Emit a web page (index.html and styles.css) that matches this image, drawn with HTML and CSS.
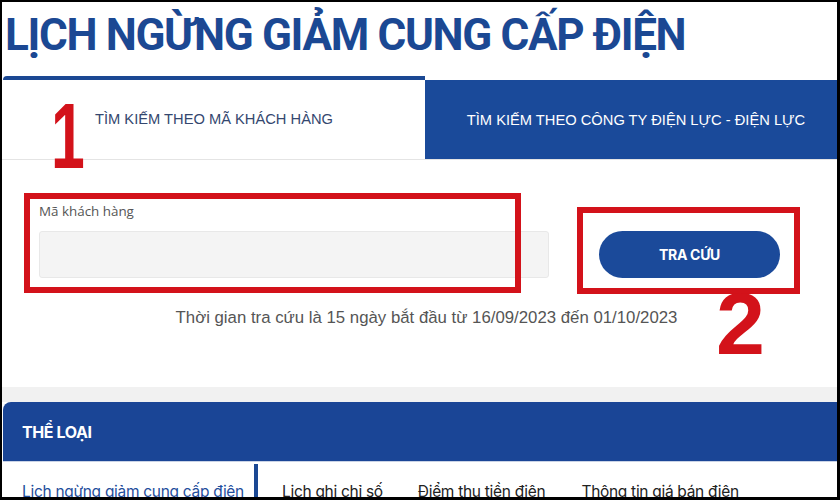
FILE: index.html
```html
<!DOCTYPE html>
<html lang="vi">
<head>
<meta charset="utf-8">
<title>Lịch ngừng giảm cung cấp điện</title>
<link rel="stylesheet" href="styles.css">
</head>
<body>
<div class="frame">
  <h1 class="title">LỊCH NGỪNG GIẢM CUNG CẤP ĐIỆN</h1>
  <div class="tabs">
    <div class="tab tab-active">TÌM KIẾM THEO MÃ KHÁCH HÀNG</div>
    <div class="tab tab-other">TÌM KIẾM THEO CÔNG TY ĐIỆN LỰC - ĐIỆN LỰC</div>
  </div>
  <div class="search">
    <div class="field">
      <label class="label">Mã khách hàng</label>
      <div class="input"></div>
    </div>
    <div class="btn">TRA CỨU</div>
  </div>
  <p class="note">Thời gian tra cứu là 15 ngày bắt đầu từ 16/09/2023 đến 01/10/2023</p>
  <div class="band"></div>
  <div class="cat-head">THỂ LOẠI</div>
  <div class="cat-list">
    <div class="cat-item cat-current">Lịch ngừng giảm cung cấp điện</div>
    <div class="cat-bar"></div>
    <div class="cat-item">Lịch ghi chỉ số</div>
    <div class="cat-item">Điểm thu tiền điện</div>
    <div class="cat-item">Thông tin giá bán điện</div>
  </div>

  <div class="mark mark-1"></div>
  <div class="mark mark-2"></div>
  <div class="num num-1">1</div>
  <div class="num num-2">2</div>
</div>
</body>
</html>
```
FILE: styles.css
```css
html, body {
  margin: 0;
  padding: 0;
  background: #000;
}
.frame {
  position: relative;
  margin: 2px 3px 0 2px;
  height: 495px;
  background: #fff;
  overflow: hidden;
}
.title {
  margin: 0;
  padding: 6px 0 0 3px;
  font-family: Roboto, "Liberation Sans", sans-serif;
  font-weight: 700;
  font-size: 44px;
  line-height: 54px;
  letter-spacing: -1.35px;
  color: #1b4893;
  white-space: nowrap;
}
.tabs {
  margin-top: 14px;
  display: flex;
  height: 84px;
  border-bottom: 1px solid #e4e4e4;
  box-sizing: border-box;
}
.tab {
  display: flex;
  align-items: center;
  justify-content: center;
  font-family: "Liberation Sans", Arial, sans-serif;
  font-size: 14.7px;
}
.tab-active {
  width: 422px;
  margin-left: 1px;
  border-top: 4px solid #1b4893;
  border-top-left-radius: 4px;
  color: #34476f;
  padding-bottom: 2px;
}
.tab-other {
  flex: 1;
  margin-top: 4px;
  background: #1a4a9a;
  color: #fff;
  padding-left: 10px;
}
.search {
  display: flex;
  align-items: flex-end;
  padding: 42px 0 0 37px;
}
.field {
  display: flex;
  flex-direction: column;
}
.label {
  font-family: "Open Sans", sans-serif;
  font-size: 13.4px;
  line-height: 18px;
  color: #555;
  margin-bottom: 11px;
}
.input {
  width: 508px;
  height: 45px;
  background: #f4f4f4;
  border: 1px solid #e8e8e8;
  border-radius: 3px;
}
.btn {
  margin-left: 50px;
  width: 181px;
  height: 47px;
  border-radius: 24px;
  background: #1b4a9a;
  color: #fff;
  font-family: Inter, Roboto, sans-serif;
  font-weight: 700;
  font-size: 14px;
  letter-spacing: -0.3px;
  display: flex;
  align-items: center;
  justify-content: center;
}
.note {
  margin: 30px 0 0;
  padding-left: 14px;
  text-align: center;
  font-family: "Liberation Sans", Arial, sans-serif;
  font-size: 16.8px;
  line-height: 20px;
  color: #555;
}
.band {
  margin-top: 59px;
  height: 15px;
  background: #f1f1f1;
}
.cat-head {
  margin-left: 1px;
  height: 60px;
  background: #1a4596;
  border-top-left-radius: 8px;
  border-bottom: 1px solid #c9d3e6;
  box-sizing: border-box;
  display: flex;
  align-items: center;
  padding-left: 19px;
  color: #fff;
  font-family: Inter, Roboto, sans-serif;
  font-weight: 700;
  font-size: 16px;
  letter-spacing: -0.4px;
}
.cat-list {
  display: flex;
  align-items: stretch;
  height: 40px;
  padding-top: 2px;
}
.cat-item {
  padding-top: 18px;
  font-family: Inter, Roboto, sans-serif;
  font-size: 15.5px;
  line-height: 20px;
  color: #222;
  white-space: nowrap;
  letter-spacing: -0.3px;
}
.cat-current {
  margin-left: 20px;
  color: #1f4e9c;
  width: 232px;
}
.cat-bar {
  width: 4px;
  background: #1b4893;
  margin-right: 24px;
}
.cat-item:nth-child(4) {
  margin-left: 35px;
}
.cat-item:nth-child(5) {
  margin-left: 36px;
}

/* annotation overlays */
.mark {
  position: absolute;
  border: 6px solid #d3121a;
  box-sizing: border-box;
}
.mark-1 {
  left: 22px;
  top: 191px;
  width: 497px;
  height: 100px;
}
.mark-2 {
  left: 575px;
  top: 205px;
  width: 223px;
  height: 87px;
}
.num {
  position: absolute;
  font-family: "Liberation Sans", Arial, sans-serif;
  font-weight: 700;
  color: #d3121a;
  line-height: 1;
}
.num-1 {
  font-size: 92px;
  left: 49px;
  top: 88px;
  transform: scaleX(0.66);
  transform-origin: 0 0;
}
.num-2 {
  font-size: 88px;
  left: 714px;
  top: 278px;
}
```
